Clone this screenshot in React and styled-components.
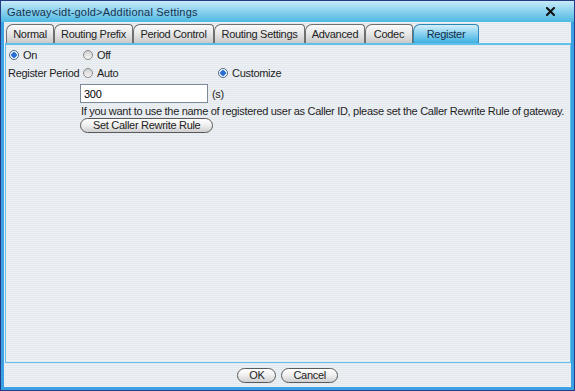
import React, { useState } from 'react';
import styled, { createGlobalStyle } from 'styled-components';

const GlobalStyle = createGlobalStyle`
  html, body {
    margin: 0;
    padding: 0;
    background: #ffffff;
  }
  body {
    font-family: "Liberation Sans", Arial, sans-serif;
    font-size: 11px;
    letter-spacing: -0.3px;
    color: #1e1e1e;
  }
`;

const stripes = `repeating-linear-gradient(to bottom, #eef1f4 0px, #eef1f4 1px, #e3e8ee 1px, #e3e8ee 2px)`;

const Window = styled.div`
  width: 575px;
  height: 391px;
  box-sizing: border-box;
  border: 1px solid #263a86;
  display: flex;
  flex-direction: column;
  background: #3aa2e2;
`;

const TitleBar = styled.div`
  height: 21px;
  flex: none;
  display: flex;
  align-items: center;
  justify-content: space-between;
  padding: 0 18px 0 6px;
  background: linear-gradient(to bottom, #c6ecf9 0%, #8fd3ef 45%, #4fb9e3 100%);
  color: #17324f;
  font-size: 11px;
  letter-spacing: 0.2px;
`;

const CloseButton = styled.button`
  border: none;
  background: transparent;
  padding: 0;
  width: 12px;
  height: 12px;
  cursor: pointer;
  display: flex;
  align-items: center;
  justify-content: center;
`;

const Body = styled.div`
  flex: 1;
  display: flex;
  flex-direction: column;
  margin: 0 3px 3px 3px;
  background: ${stripes};
  min-height: 0;
`;

const TabRow = styled.div`
  display: flex;
  align-items: flex-end;
  height: 21px;
  padding: 0 0 0 2px;
  flex: none;
`;

const Tab = styled.div`
  width: ${(p) => p.$w}px;
  height: 19px;
  box-sizing: border-box;
  display: flex;
  align-items: center;
  justify-content: center;
  border: 1px solid ${(p) => (p.$active ? '#2d86b8' : '#6f6f6f')};
  border-bottom: none;
  border-radius: 7px 4px 0 0;
  background: ${(p) =>
    p.$active
      ? 'linear-gradient(to bottom, #d3f0fb 0%, #86d0ef 50%, #3fb0e0 100%)'
      : 'linear-gradient(to bottom, #fbfbfb 0%, #e6e6e6 50%, #c9c9c9 100%)'};
  color: ${(p) => (p.$active ? '#0f2d4a' : '#222')};
  font-size: 11px;
  cursor: pointer;
  white-space: nowrap;
`;

const Panel = styled.div`
  flex: 1;
  margin: 0 0 0 1px;
  border: 1px solid #5fc0ea;
  border-top: 2px solid #5fc0ea;
  padding: 3px 0 0 2px;
  display: flex;
  flex-direction: column;
  gap: 4px;
  min-height: 0;
`;

const Row = styled.div`
  display: flex;
  align-items: center;
  height: ${(p) => p.$h || 14}px;
  margin-left: ${(p) => p.$indent || 0}px;
  margin-top: ${(p) => p.$mt || 0}px;
  white-space: nowrap;
`;

const Label = styled.span`
  display: inline-block;
  width: ${(p) => p.$w || 'auto'}px;
  white-space: nowrap;
`;

const RadioItem = styled.label`
  display: flex;
  align-items: center;
  gap: 4px;
  width: ${(p) => (p.$w ? `${p.$w}px` : 'auto')};
  cursor: pointer;
`;

const RadioDot = styled.span`
  width: 10px;
  height: 10px;
  box-sizing: border-box;
  border-radius: 50%;
  border: 1px solid ${(p) => (p.$checked ? '#4d6a8a' : '#8a8a8a')};
  background: ${(p) =>
    p.$checked
      ? 'radial-gradient(circle, #2a6fd6 0, #2a6fd6 2.5px, #f4f8fb 3px)'
      : 'linear-gradient(to bottom, #d0d0d0, #f6f6f6)'};
  flex: none;
`;

const TextInput = styled.input`
  width: 128px;
  height: 19px;
  box-sizing: border-box;
  border: 1px solid #7d8b99;
  background: #fff;
  font-family: "Liberation Sans", Arial, sans-serif;
  font-size: 11px;
  letter-spacing: -0.3px;
  padding: 0 3px;
  margin: 0 4px 0 0;
  outline: none;
`;

const PillButton = styled.button`
  height: 15px;
  box-sizing: border-box;
  padding: 0 ${(p) => p.$pad || 12}px;
  border: 1px solid #5a5a5a;
  border-radius: 8px;
  background: linear-gradient(to bottom, #ffffff 0%, #eeeeee 50%, #cfcfcf 100%);
  font-family: "Liberation Sans", Arial, sans-serif;
  font-size: 11px;
  letter-spacing: -0.3px;
  color: #222;
  line-height: 13px;
  cursor: pointer;
  white-space: nowrap;
`;

const Footer = styled.div`
  height: 24px;
  flex: none;
  display: flex;
  align-items: center;
  justify-content: center;
  gap: 5px;
`;

const Radio = ({ checked, onClick, children, w }) => (
  <RadioItem $w={w} onClick={onClick}>
    <RadioDot $checked={checked} />
    <span>{children}</span>
  </RadioItem>
);

const tabs = [
  { name: 'Normal', w: 48 },
  { name: 'Routing Prefix', w: 79 },
  { name: 'Period Control', w: 81 },
  { name: 'Routing Settings', w: 91 },
  { name: 'Advanced', w: 60 },
  { name: 'Codec', w: 48 },
  { name: 'Register', w: 66 },
];

const App = () => {
  const [active, setActive] = useState('Register');
  const [enabled, setEnabled] = useState(true);
  const [period, setPeriod] = useState('custom');
  const [value, setValue] = useState('300');

  return (
    <>
      <GlobalStyle />
      <Window>
        <TitleBar>
          <span>Gateway&lt;idt-gold&gt;Additional Settings</span>
          <CloseButton aria-label="close">
            <svg width="9" height="9" viewBox="0 0 9 9">
              <path d="M1 1 L8 8 M8 1 L1 8" stroke="#111" strokeWidth="2" strokeLinecap="square" />
            </svg>
          </CloseButton>
        </TitleBar>
        <Body>
          <TabRow>
            {tabs.map((t) => (
              <Tab
                key={t.name}
                $w={t.w}
                $active={active === t.name}
                onClick={() => setActive(t.name)}
              >
                {t.name}
              </Tab>
            ))}
          </TabRow>
          <Panel>
            <Row>
              <Label $w={1} />
              <Radio w={74} checked={enabled} onClick={() => setEnabled(true)}>On</Radio>
              <Radio checked={!enabled} onClick={() => setEnabled(false)}>Off</Radio>
            </Row>
            <Row>
              <Label $w={75}>Register Period</Label>
              <Radio w={135} checked={period === 'auto'} onClick={() => setPeriod('auto')}>Auto</Radio>
              <Radio checked={period === 'custom'} onClick={() => setPeriod('custom')}>Customize</Radio>
            </Row>
            <Row $h={19} $indent={72}>
              <TextInput value={value} onChange={(e) => setValue(e.target.value)} />
              <span>(s)</span>
            </Row>
            <Row $h={13} $indent={73} $mt={-3}>
              If you want to use the name of registered user as Caller ID, please set the Caller Rewrite Rule of gateway.
            </Row>
            <Row $h={15} $indent={72} $mt={-3}>
              <PillButton $pad={12}>Set Caller Rewrite Rule</PillButton>
            </Row>
          </Panel>
          <Footer>
            <PillButton $pad={11}>OK</PillButton>
            <PillButton $pad={11}>Cancel</PillButton>
          </Footer>
        </Body>
      </Window>
    </>
  );
};

export default App;
